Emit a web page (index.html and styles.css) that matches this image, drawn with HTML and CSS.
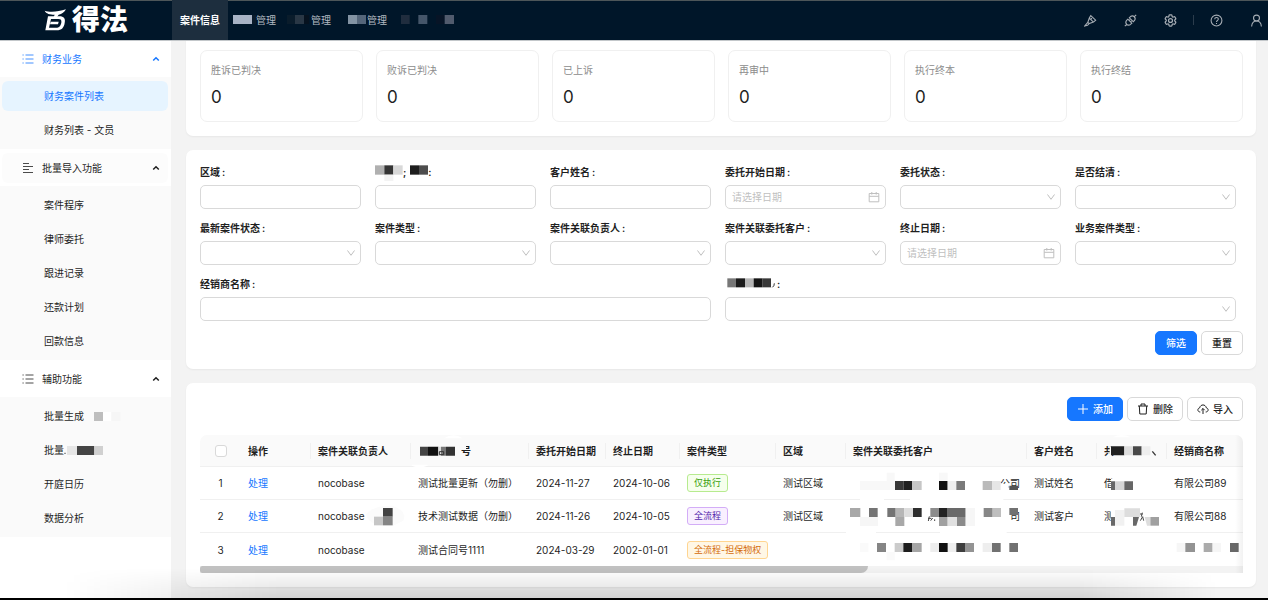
FILE: index.html
```html
<!DOCTYPE html>
<html lang="zh-CN">
<head>
<meta charset="utf-8">
<meta name="viewport" content="width=device-width, initial-scale=1">
<title>得法</title>
<link rel="stylesheet" href="styles.css">
</head>
<body>
<svg class="defs" aria-hidden="true">
  <symbol id="i-list" viewBox="0 0 12 12"><path d="M3.5 2h8M3.5 6h8M3.5 10h8M.5 2h1.2M.5 6h1.2M.5 10h1.2"/></symbol>
  <symbol id="i-align" viewBox="0 0 12 12"><path d="M1 1.5h6M1 4.5h10M1 7.500h6M1 10.500h10"/></symbol>
  <symbol id="i-up" viewBox="0 0 8 8"><path d="M1.200 5.500 4 2.700l2.800 2.800"/></symbol>
  <symbol id="i-down" viewBox="0 0 10 10"><path d="M1.500 2.500 5 7.300l3.500-4.800"/></symbol>
  <symbol id="i-date" viewBox="0 0 12 12"><path d="M1.200 2.500h9.600v8.300H1.200zM1.200 5.300h9.600M3.800 1v2.600M8.200 1v2.600"/></symbol>
</svg>

<header class="topbar">
  <a class="logo" href="#" aria-label="得法">
    <svg class="logo-mark" viewBox="0 0 66 66" aria-hidden="true">
      <path d="M2 5C16 10 42 9 66 1 61 10 54 15 44 17L39 24H29L32 17C18 17 6 14 2 5Z"/>
      <path fill-rule="evenodd" d="M12 22H46C60 22 65 29 62 42 60 56 53 64 38 64H4ZM21 30 15 56H36C46 56 50 50 52 41 53 33 51 30 43 30Z"/>
      <path d="M20 38H44L42 46H18Z"/>
    </svg>
    <span class="logo-text">得法</span>
  </a>
  <nav class="tabs">
    <a class="tab active" href="#">案件信息</a>
    <a class="tab" href="#"><svg width="23" height="15" viewBox="0 0 69 45"><path fill="#a8b3c5" d="M0 6h57v27H0z"/><path fill="#0b1b2b" d="M57 6h12v27H57z"/></svg>管理</a>
    <a class="tab" href="#"><svg width="24" height="15" viewBox="0 0 72 45"><path fill="#0a1c2b" d="M0 6h24v27H0z"/><path fill="#293745" d="M24 6h27v27H24z"/><path fill="#06121f" d="M51 6h15v27H51z"/></svg>管理</a>
    <a class="tab" href="#"><svg width="19" height="15" viewBox="0 0 57 45"><path fill="#8393a3" d="M0 6h27v27H0z"/><path fill="#55667a" d="M27 6h27v27H27z"/></svg>管理</a>
    <a class="tab" href="#" aria-label="更多"><svg width="62" height="15" viewBox="0 0 186 45"><path fill="#202d3e" d="M0 6h26v27H0z"/><path fill="#45566a" d="M52 6h27v27H52z"/><path fill="#071426" d="M105 6h26v27h-26z"/><path fill="#515b6d" d="M131 6h28v27h-28z"/></svg></a>
  </nav>
  <div class="tools">
    <button type="button" aria-label="界面配置"><svg viewBox="0 0 24 24"><path d="M1.500 22 7 15.500l2.800-8L12.500 3l9 8.500-4 3.500-7.500 2.500L6.500 21zM9.800 7.500l7.700 7.500M7 15.500l3 2.500M12.500 10.500l2-3"/></svg></button>
    <button type="button" aria-label="插件"><svg viewBox="0 0 24 24"><path d="m1.500 22.500 4-4M22.500 1.500l-4 4M7 9.500l7.500 7.500-2.500 2.300c-5 3.600-11-2-7.500-7.300zM12 4.700 9.800 7l7.400 7.300L19.500 12C23 7 17 1 12 4.700zM9 12.500l2.200-2.200M11.700 15.200l2.200-2.200"/></svg></button>
    <button type="button" aria-label="设置"><svg viewBox="1.500 1.500 21 21"><path d="M9.594 3.940c.09-.542.56-.94 1.110-.94h2.593c.55 0 1.020.398 1.110.94l.213 1.281c.063.374.313.686.645.87.074.04.147.083.22.127.325.196.72.257 1.075.124l1.217-.456a1.125 1.125 0 0 1 1.370.49l1.296 2.247a1.125 1.125 0 0 1-.26 1.431l-1.003.827c-.293.241-.438.613-.43.992a7.723 7.723 0 0 1 0 .255c-.008.378.137.75.43.991l1.004.827c.424.35.534.955.26 1.430l-1.298 2.247a1.125 1.125 0 0 1-1.369.491l-1.217-.456c-.355-.133-.75-.072-1.076.124a6.470 6.470 0 0 1-.22.128c-.331.183-.581.495-.644.869l-.213 1.281c-.09.543-.56.94-1.110.94h-2.594c-.55 0-1.019-.398-1.110-.94l-.213-1.281c-.062-.374-.312-.686-.644-.87a6.520 6.520 0 0 1-.22-.127c-.325-.196-.72-.257-1.076-.124l-1.217.456a1.125 1.125 0 0 1-1.369-.49l-1.297-2.247a1.125 1.125 0 0 1 .26-1.431l1.004-.827c.292-.24.437-.613.43-.991a6.932 6.932 0 0 1 0-.255c.007-.38-.138-.751-.43-.992l-1.004-.827a1.125 1.125 0 0 1-.26-1.430l1.297-2.247a1.125 1.125 0 0 1 1.370-.491l1.216.456c.356.133.751.072 1.076-.124.072-.044.146-.086.22-.128.332-.183.582-.495.644-.869z"/><circle cx="12" cy="12" r="3.200"/></svg></button>
    <span class="divider"></span>
    <button type="button" aria-label="帮助"><svg viewBox="0 0 24 24"><circle cx="12" cy="12" r="10"/><path d="M8.700 9.800c0-4.600 6.800-4.400 6.600-.2-.1 2.400-3.300 2.400-3.300 5M12 16.500v2"/></svg></button>
    <button type="button" aria-label="用户"><svg viewBox="0 0 24 24"><circle cx="12" cy="7.500" r="5.500"/><path d="M3 23c.6-7 4-10 9-10s8.400 3 9 10"/></svg></button>
  </div>
</header>

<div class="layout">
  <aside class="sidebar">
    <button type="button" class="group current"><svg class="gi"><use href="#i-list"/></svg>财务业务<svg class="arrow"><use href="#i-up"/></svg></button>
    <nav class="submenu">
      <a class="selected" href="#">财务案件列表</a>
      <a href="#">财务列表 - 文员</a>
    </nav>
    <button type="button" class="group hovered"><svg class="gi"><use href="#i-align"/></svg>批量导入功能<svg class="arrow"><use href="#i-up"/></svg></button>
    <nav class="submenu">
      <a href="#">案件程序</a>
      <a href="#">律师委托</a>
      <a href="#">跟进记录</a>
      <a href="#">还款计划</a>
      <a href="#">回款信息</a>
    </nav>
    <button type="button" class="group"><svg class="gi"><use href="#i-list"/></svg>辅助功能<svg class="arrow"><use href="#i-up"/></svg></button>
    <nav class="submenu">
      <a href="#">批量生成<svg width="38" height="9" viewBox="0 0 114 27"><path fill="#bebebe" d="M30 0h27v27H30z"/><path fill="#fff" d="M57 0h25v27H57z"/><path fill="#f6f6f6" d="M82 0h27v27H82z"/></svg></a>
      <a href="#">批量<svg width="40" height="9" viewBox="0 0 120 27"><path fill="#666" d="M1 20h4v4H1z"/><path fill="#e6e6e6" d="M9 0h30v27H9z"/><path fill="#444" d="M39 0h52v27H39z"/><path fill="#d0d0d0" d="M91 0h26v27H91z"/></svg></a>
      <a href="#">开庭日历</a>
      <a href="#">数据分析</a>
    </nav>
  </aside>

  <main class="content">
    <section class="card stats">
      <div class="stat"><span>胜诉已判决</span><strong>0</strong></div>
      <div class="stat"><span>败诉已判决</span><strong>0</strong></div>
      <div class="stat"><span>已上诉</span><strong>0</strong></div>
      <div class="stat"><span>再审中</span><strong>0</strong></div>
      <div class="stat"><span>执行终本</span><strong>0</strong></div>
      <div class="stat"><span>执行终结</span><strong>0</strong></div>
    </section>

    <form class="card filter">
      <div class="fields">
        <div class="field"><label for="f1">区域<i>:</i></label><input id="f1" type="text"></div>
        <div class="field"><label for="f2"><svg width="28" height="17" viewBox="0 0 84 51"><path fill="#b0b0b0" d="M0 4h28v28H0z"/><path fill="#353535" d="M28 4h27v28H28z"/><path fill="#d8d8d8" d="M55 4h28v28H55z"/><path fill="#f3f3f3" d="M28 32h27v19H28z"/></svg>;<svg class="after" width="18" height="17" viewBox="0 0 54 51"><path fill="#1e1e1e" d="M0 4h27v28H0z"/><path fill="#4d4d4d" d="M27 4h27v28H27z"/></svg>:</label><input id="f2" type="text"></div>
        <div class="field"><label for="f3">客户姓名<i>:</i></label><input id="f3" type="text"></div>
        <div class="field"><label for="f4">委托开始日期<i>:</i></label><div class="control"><input id="f4" type="text" placeholder="请选择日期"><svg class="date"><use href="#i-date"/></svg></div></div>
        <div class="field"><label for="f5">委托状态<i>:</i></label><div class="control"><select id="f5"><option></option></select><svg><use href="#i-down"/></svg></div></div>
        <div class="field"><label for="f6">是否结清<i>:</i></label><div class="control"><select id="f6"><option></option></select><svg><use href="#i-down"/></svg></div></div>
        <div class="field"><label for="f7">最新案件状态<i>:</i></label><div class="control"><select id="f7"><option></option></select><svg><use href="#i-down"/></svg></div></div>
        <div class="field"><label for="f8">案件类型<i>:</i></label><div class="control"><select id="f8"><option></option></select><svg><use href="#i-down"/></svg></div></div>
        <div class="field"><label for="f9">案件关联负责人<i>:</i></label><div class="control"><select id="f9"><option></option></select><svg><use href="#i-down"/></svg></div></div>
        <div class="field"><label for="f10">案件关联委托客户<i>:</i></label><div class="control"><select id="f10"><option></option></select><svg><use href="#i-down"/></svg></div></div>
        <div class="field"><label for="f11">终止日期<i>:</i></label><div class="control"><input id="f11" type="text" placeholder="请选择日期"><svg class="date"><use href="#i-date"/></svg></div></div>
        <div class="field"><label for="f12">业务案件类型<i>:</i></label><div class="control"><select id="f12"><option></option></select><svg><use href="#i-down"/></svg></div></div>
        <div class="field wide"><label for="f13">经销商名称<i>:</i></label><input id="f13" type="text"></div>
        <div class="field wide"><label for="f14"><svg width="50" height="17" viewBox="0 0 150 51"><path fill="#777" d="M7 7h26v27H7z"/><path fill="#1c1c1c" d="M33 7h27v27H33z"/><path fill="#b5b5b5" d="M60 7h26v27H60z"/><path fill="#151515" d="M86 7h27v27H86z"/><path fill="#383838" d="M113 7h25v27h-25z"/><path fill="none" stroke="#333" stroke-width="3" d="M148 22q0 9-6 12"/></svg><i>:</i></label><div class="control"><select id="f14"><option></option></select><svg><use href="#i-down"/></svg></div></div>
      </div>
      <div class="actions">
        <button type="submit" class="btn primary">筛选</button>
        <button type="reset" class="btn">重置</button>
      </div>
    </form>

    <section class="card list">
      <div class="actions">
        <button type="button" class="btn primary"><svg viewBox="0 0 12 12"><path d="M6 1v10M1 6h10"/></svg>添加</button>
        <button type="button" class="btn"><svg viewBox="0 0 12 12"><path d="M1 3h10M4 3V1h4v2M2.300 3l.5 8h6.400l.5-8"/></svg>删除</button>
        <button type="button" class="btn"><svg viewBox="0 0 12 12"><path d="M3.300 9C.4 9 0 5.500 2.700 4.800 3.500 1 8.500 1 9.300 4.800 12 5.500 11.600 9 8.700 9M6 11V5.500M4.300 7.200 6 5.500l1.700 1.700"/></svg>导入</button>
      </div>
      <div class="table-wrap">
        <table>
          <colgroup><col class="w41"><col class="w70"><col class="w100"><col class="w118"><col class="w77"><col class="w74"><col class="w96"><col class="w70"><col class="w181"><col class="w70"><col class="w70"><col class="w76"></colgroup>
          <thead>
            <tr>
              <th class="pick"><input type="checkbox" aria-label="全选"></th>
              <th>操作</th>
              <th>案件关联负责人</th>
              <th><svg class="inline" width="43" height="13" viewBox="0 0 129 39"><path fill="#444" d="M6 5h24v27H6z"/><path fill="#111" d="M30 5h31v27H30z"/><path fill="#ddd" d="M61 5h8v27h-8z"/><path fill="#777" d="M69 5h15v27H69z"/><path fill="none" stroke="#333" stroke-width="3" d="M64 29v-9h13v9z"/><path fill="#333" d="M84 5h27v27H84z"/></svg>号<svg class="cover" viewBox="663 30 354 96"><path fill="#fafafa" d="M808 58h20v14h-20z"/><path fill="#fff" d="M762 40q28-18 56 0zM665 122q24 10 48 0v-3h-48z"/></svg></th>
              <th>委托开始日期</th>
              <th>终止日期</th>
              <th>案件类型</th>
              <th>区域</th>
              <th>案件关联委托客户</th>
              <th>客户姓名</th>
              <th>共<svg class="cover" viewBox="201 165 210 96"><path fill="#fff" d="M248 172q28-14 54 0z"/><path fill="#fafafa" d="M239 199h6v30h-6z"/><path fill="#202020" d="M243 199h40v27h-40z"/><path fill="#ddd" d="M283 199h26v27h-26z"/><path fill="#484848" d="M309 199h26v27h-26z"/><path fill="#eee" d="M335 199h26v27h-26z"/><path fill="none" stroke="#333" stroke-width="4" d="m367 214 10 12"/></svg></th>
              <th>经销商名称</th>
            </tr>
          </thead>
          <tbody>
            <tr>
              <td class="pick">1</td><td><a href="#">处理</a></td><td>nocobase</td><td>测试批量更新（勿删）</td><td>2024-11-27</td><td>2024-10-06</td><td><span class="tag green">仅执行</span></td><td>测试区域</td>
              <td class="end">公司<svg class="cover" viewBox="18 231 543 99"><path fill="#fff" d="M476 281h30v22h-30zM60 326h72v6H60zM210 326h280v6H210z"/><path fill="#f8f8f8" d="M60 273h105v27H60zM140 248h24v25h-24zM297 248h26v25h-26z"/><path fill="#383838" d="M165 273h25v27h-25z"/><path fill="#202020" d="M190 273h26v27h-26z"/><path fill="#c6c6c6" d="M216 273h29v27h-29z"/><path fill="#111" d="M297 273h26v27h-26z"/><path fill="#eee" d="M323 273h26v27h-26z"/><path fill="#7a7a7a" d="M349 273h26v27h-26z"/><path fill="#bababa" d="M428 273h28v27h-28z"/><path fill="#e6e6e6" d="M456 273h26v27h-26z"/><path fill="#555" d="M508 287h26v13h-26z"/></svg></td>
              <td>测试姓名</td>
              <td>借<svg class="cover" viewBox="201 261 210 99"><path fill="#fff" d="M243 296h32v38h-32z"/><path fill="#666" d="M243 304h12v26h-12z"/><path fill="#d6d6d6" d="M255 304h28v26h-28z"/><path fill="#666" d="M283 304h26v26h-26z"/></svg></td>
              <td>有限公司89</td>
            </tr>
            <tr>
              <td class="pick">2</td><td><a href="#">处理</a></td><td>nocobase<svg class="cover" viewBox="363 225 300 99"><path fill="#fbfbfb" d="M528 270q20-30 80-28 45 18 32 45l-30 15q-70 5-82-32z"/><path fill="#444" d="M579 249h29v26h-29z"/><path fill="#c6c6c6" d="M552 275h27v26h-27z"/><path fill="#858585" d="M579 275h29v26h-29z"/></svg></td><td>技术测试数据（勿删）</td><td>2024-11-26</td><td>2024-10-05</td><td><span class="tag purple">全流程</span></td><td>测试区域</td>
              <td class="end">司<svg class="cover" viewBox="18 330 543 99"><path fill="#fff" d="M18 424h90v7H18zM300 424h200v7H300z"/><path fill="#a8a8a8" d="M30 354h31v27H30zM166 381h27v27h-27z"/><path fill="#747474" d="M87 354h26v27H87zM142 354h25v27h-25z"/><path fill="#b6b6b6" d="M167 354h26v27h-26z"/><path fill="#ddd" d="M193 354h26v27h-26z"/><path fill="#2d2d2d" d="M219 354h26v27h-26z"/><path fill="#8c8c8c" d="M271 354h26v27h-26z"/><path fill="#222" d="M297 354h26v27h-26z"/><path fill="#696969" d="M323 354h54v27h-54z"/><path fill="#a0a0a0" d="M297 381h26v27h-26z"/><path fill="#e0e0e0" d="M323 381h28v27h-28z"/><path fill="#8a8a8a" d="M351 381h26v27h-26z"/><path fill="#f6f6f6" d="M60 381h54v27H60zM377 354h28v54h-28z"/><path fill="#878787" d="M431 354h27v27h-27z"/><path fill="#bebebe" d="M458 354h25v27h-25z"/><path fill="#717171" d="M508 354h26v21h-26z"/><path fill="none" stroke="#444" stroke-width="3" d="M264 385h10M268 379l-3 14M272 392l6-8M284 388v5"/></svg></td>
              <td>测试客户</td>
              <td>测<svg class="cover" viewBox="201 360 210 99"><path fill="#fff" d="M243 385h40v26h-40z"/><path fill="#f1f1f1" d="M255 390h28v47h-28z"/><path fill="#686868" d="M243 411h12v26h-12zM309 411h18l-8 26h-10z"/><path fill="#ddd" d="M283 385h47v26h-47zM344 411h16v26h-9z"/><path fill="#a0a0a0" d="M361 411h26v26h-26z"/><path fill="none" stroke="#444" stroke-width="3" d="M330 402h8M331 422l7-12 3 12M337 398l-3 12"/></svg></td>
              <td>有限公司88</td>
            </tr>
            <tr>
              <td class="pick">3</td><td><a href="#">处理</a></td><td>nocobase</td><td>测试合同号1111</td><td>2024-03-29</td><td>2002-01-01</td><td><span class="tag orange">全流程-担保物权</span></td><td></td>
              <td><svg class="cover" viewBox="18 429 543 99"><path fill="#fafafa" d="M60 459h25v27H60zM140 486h24v25h-24z"/><path fill="#858585" d="M111 459h27v27h-27z"/><path fill="#cbcbcb" d="M164 459h26v27h-26z"/><path fill="#1d1d1d" d="M190 459h26v27h-26z"/><path fill="#a5a5a5" d="M216 459h29v27h-29z"/><path fill="#eee" d="M271 459h26v27h-26zM323 459h26v27h-26zM428 459h28v27h-28z"/><path fill="#111" d="M297 459h26v27h-26z"/><path fill="#3d3d3d" d="M349 459h26v27h-26z"/><path fill="#939393" d="M375 459h27v27h-27z"/><path fill="#717171" d="M456 459h26v27h-26zM508 459h26v27h-26z"/></svg></td>
              <td></td><td></td>
              <td><svg class="cover" viewBox="411 459 228 99"><path fill="#f6f6f6" d="M440 489h26v27h-26zM547 489h26v27h-26z"/><path fill="#939393" d="M466 489h29v27h-29z"/><path fill="#ababab" d="M521 489h26v27h-26z"/><path fill="#686868" d="M600 489h26v27h-26z"/></svg></td>
            </tr>
          </tbody>
        </table>
        <div class="scrollbar"><div class="thumb"></div></div>
      </div>
    </section>
  </main>
</div>
<div class="dock-shade"></div>
</body>
</html>
```

FILE: styles.css
```css
* { box-sizing: border-box; }

body {
  margin: 0;
  min-height: 100vh;
  display: flex;
  flex-direction: column;
  background: #f3f3f3;
  color: #1f1f1f;
  font: 10px/16px Inter, "Noto Sans CJK SC", sans-serif;
}

a { color: #1677ff; text-decoration: none; }
button, input, select { font: inherit; color: inherit; }
button { cursor: pointer; }
svg { fill: none; stroke: currentColor; }
svg path[fill]:not([stroke]) { stroke: none; }
i { font-style: normal; }
.defs { position: absolute; width: 0; height: 0; }

/* Top bar */
.topbar {
  display: flex;
  height: 40px;
  flex: none;
  background: #001629;
  box-shadow: inset 0 1px 0 #4d5659, 0 1px 0 #c3c7ca;
  z-index: 1;
}
.logo {
  width: 172px;
  display: flex;
  align-items: center;
  justify-content: center;
  gap: 6px;
  color: #fff;
}
.logo-mark { width: 22px; height: 22px; fill: #fff; stroke: none; }
.logo-text { font-size: 28px; line-height: 36px; font-weight: 900; }
.tabs { display: flex; gap: 11px; }
.tab { display: flex; align-items: center; color: #b3bac1; }
.tab:nth-child(2) { margin-left: -6px; }
.tab:nth-child(4) { margin-left: 6px; }
.tab:nth-child(5) { margin-left: 3px; }
.tab.active { padding: 0 8px; background: #1d2e3e; color: #fff; font-weight: 600; }
.tools {
  margin-left: auto;
  padding-right: 5px;
  display: flex;
  align-items: center;
  gap: 27px;
  color: #a6adb4;
}
.tools button { padding: 0; border: 0; background: none; display: flex; }
.tools svg { width: 13px; height: 13px; stroke-width: 2; }
.divider { width: 1px; height: 10px; margin: 0 -11px; background: #2b3c4c; }

/* Layout */
.layout { display: flex; flex: 1; }
.sidebar { width: 171px; flex: none; background: #fff; }
.content {
  flex: 1;
  min-width: 0;
  padding: 0 12px 13px 15px;
  display: flex;
  flex-direction: column;
  gap: 14px;
}

/* Side menu */
.group {
  display: flex;
  align-items: center;
  width: 166px;
  height: 30px;
  margin: 4px 2px 3px;
  padding: 0 8px 0 20px;
  border: 0;
  border-radius: 6px;
  background: none;
}
.group.current { color: #1677ff; }
.group.hovered { background: #fcfcfc; }
.gi { width: 12px; height: 12px; margin-right: 8px; opacity: .8; }
.arrow { width: 8px; height: 8px; margin-left: auto; stroke-width: 1.500; }
.submenu {
  display: flex;
  flex-direction: column;
  gap: 4px;
  padding: 4px 3px 4px 2px;
  background: #fafafa;
}
.submenu a {
  display: flex;
  align-items: center;
  height: 30px;
  padding-left: 42px;
  border-radius: 6px;
  color: #1f1f1f;
}
.submenu a.selected { background: #e6f4ff; color: #1677ff; }

/* Cards */
.card {
  padding: 14px 13px 14px 14px;
  border-radius: 7px;
  background: #fff;
  box-shadow: 0 1px 2px #0000000d;
}
.stats {
  display: grid;
  grid-template-columns: repeat(6, 1fr);
  gap: 13px;
  padding-top: 10px;
  border-radius: 0 0 7px 7px;
}
.stat {
  display: flex;
  flex-direction: column;
  gap: 5px;
  height: 72px;
  padding: 11px 10px;
  border: 1px solid #f0f0f0;
  border-radius: 7px;
}
.stat span { color: #8c8c8c; }
.stat strong { font-size: 17px; line-height: 28px; font-weight: 400; }

/* Filter form */
.fields {
  display: grid;
  grid-template-columns: repeat(6, 1fr);
  gap: 11px 14px;
  margin-right: 7px;
}
.field { min-width: 0; }
.wide { grid-column: span 3; }
.field label {
  display: flex;
  height: 17px;
  margin-bottom: 4px;
  line-height: 17px;
  font-weight: 600;
}
.field label i { margin-left: 2px; }
.after { margin-left: 4px; }
.field input, .field select {
  display: block;
  width: 100%;
  height: 24px;
  padding: 0 6px;
  border: 1px solid #d9d9d9;
  border-radius: 5px;
  background: #fff;
  appearance: none;
  outline: none;
}
.field input::placeholder { color: #bfbfbf; opacity: 1; }
.control { display: grid; align-items: center; color: #bfbfbf; }
.control > * { grid-area: 1 / 1; }
.control svg {
  width: 10px;
  height: 10px;
  margin-right: 5px;
  justify-self: end;
  pointer-events: none;
}
.control svg.date { width: 12px; height: 12px; margin-right: 6px; }
.actions { display: flex; justify-content: flex-end; gap: 4px; }
.filter .actions { margin-top: 10px; }
.btn {
  display: flex;
  align-items: center;
  gap: 4px;
  height: 24px;
  padding: 0 10px;
  border: 1px solid #d9d9d9;
  border-radius: 5px;
  background: #fff;
  font-weight: 500;
}
.btn.primary { border-color: #1677ff; background: #1677ff; color: #fff; }
.btn svg { width: 12px; height: 12px; }
.list .btn { padding: 0 9px; }

/* Table */
.table-wrap { position: relative; margin-top: 14px; overflow: hidden; border-radius: 7px 7px 0 0; }
.table-wrap::after {
  content: "";
  position: absolute;
  inset: 0 0 0 auto;
  width: 8px;
  background: linear-gradient(to right, transparent, #0000000d);
}
table { width: 100%; table-layout: fixed; border-collapse: separate; border-spacing: 0; }
.w41 { width: 41px; }
.w70 { width: 70px; }
.w74 { width: 74px; }
.w76 { width: 76px; }
.w77 { width: 77px; }
.w96 { width: 96px; }
.w100 { width: 100px; }
.w118 { width: 118px; }
.w181 { width: 181px; }
th, td {
  position: relative;
  height: 33px;
  padding: 0 7px;
  border-bottom: 1px solid #f0f0f0;
  text-align: left;
  white-space: nowrap;
}
th { height: 32px; background: #fafafa; font-weight: 600; }
th:nth-child(n+2):not(:last-child)::after {
  content: "";
  position: absolute;
  top: 8px;
  right: 0;
  width: 1px;
  height: 16px;
  background: #f0f0f0;
}
tbody tr:last-child td { border-bottom: 0; }
.pick { text-align: center; }
.end { text-align: right; }
.pick input {
  display: block;
  width: 12px;
  height: 12px;
  margin: 0 auto;
  border: 1px solid #d9d9d9;
  border-radius: 3px;
  background: #fff;
  appearance: none;
}
.inline { vertical-align: middle; }
.cover { position: absolute; top: 0; left: 0; width: 100%; height: 33px; overflow: visible; }
th .cover { height: 32px; }
.tag {
  display: inline-block;
  height: 18px;
  padding: 0 6px;
  border: 1px solid;
  border-radius: 3px;
  font-size: 9px;
  line-height: 16px;
  vertical-align: middle;
}
.green { color: #389e0d; background: #f6ffed; border-color: #b7eb8f; }
.purple { color: #531dab; background: #f9f0ff; border-color: #d3adf7; }
.orange { color: #d46b08; background: #fff7e6; border-color: #ffd591; }
.scrollbar { height: 7px; background: #f3f3f3; }
.thumb { width: 64%; height: 7px; border-radius: 4px 0 12px 4px; background: #c1c1c1; }

/* Shade along the lower screen edge */
.dock-shade {
  position: fixed;
  inset: auto 0 0 0;
  height: 32px;
  border-bottom: 2px solid #000;
  background: linear-gradient(to right, #f3f3f300 5%, #00000020 22%, #00000020 85%, #f3f3f300 96%);
  mask-image: linear-gradient(to bottom, transparent, #000 90%);
  pointer-events: none;
}
```
